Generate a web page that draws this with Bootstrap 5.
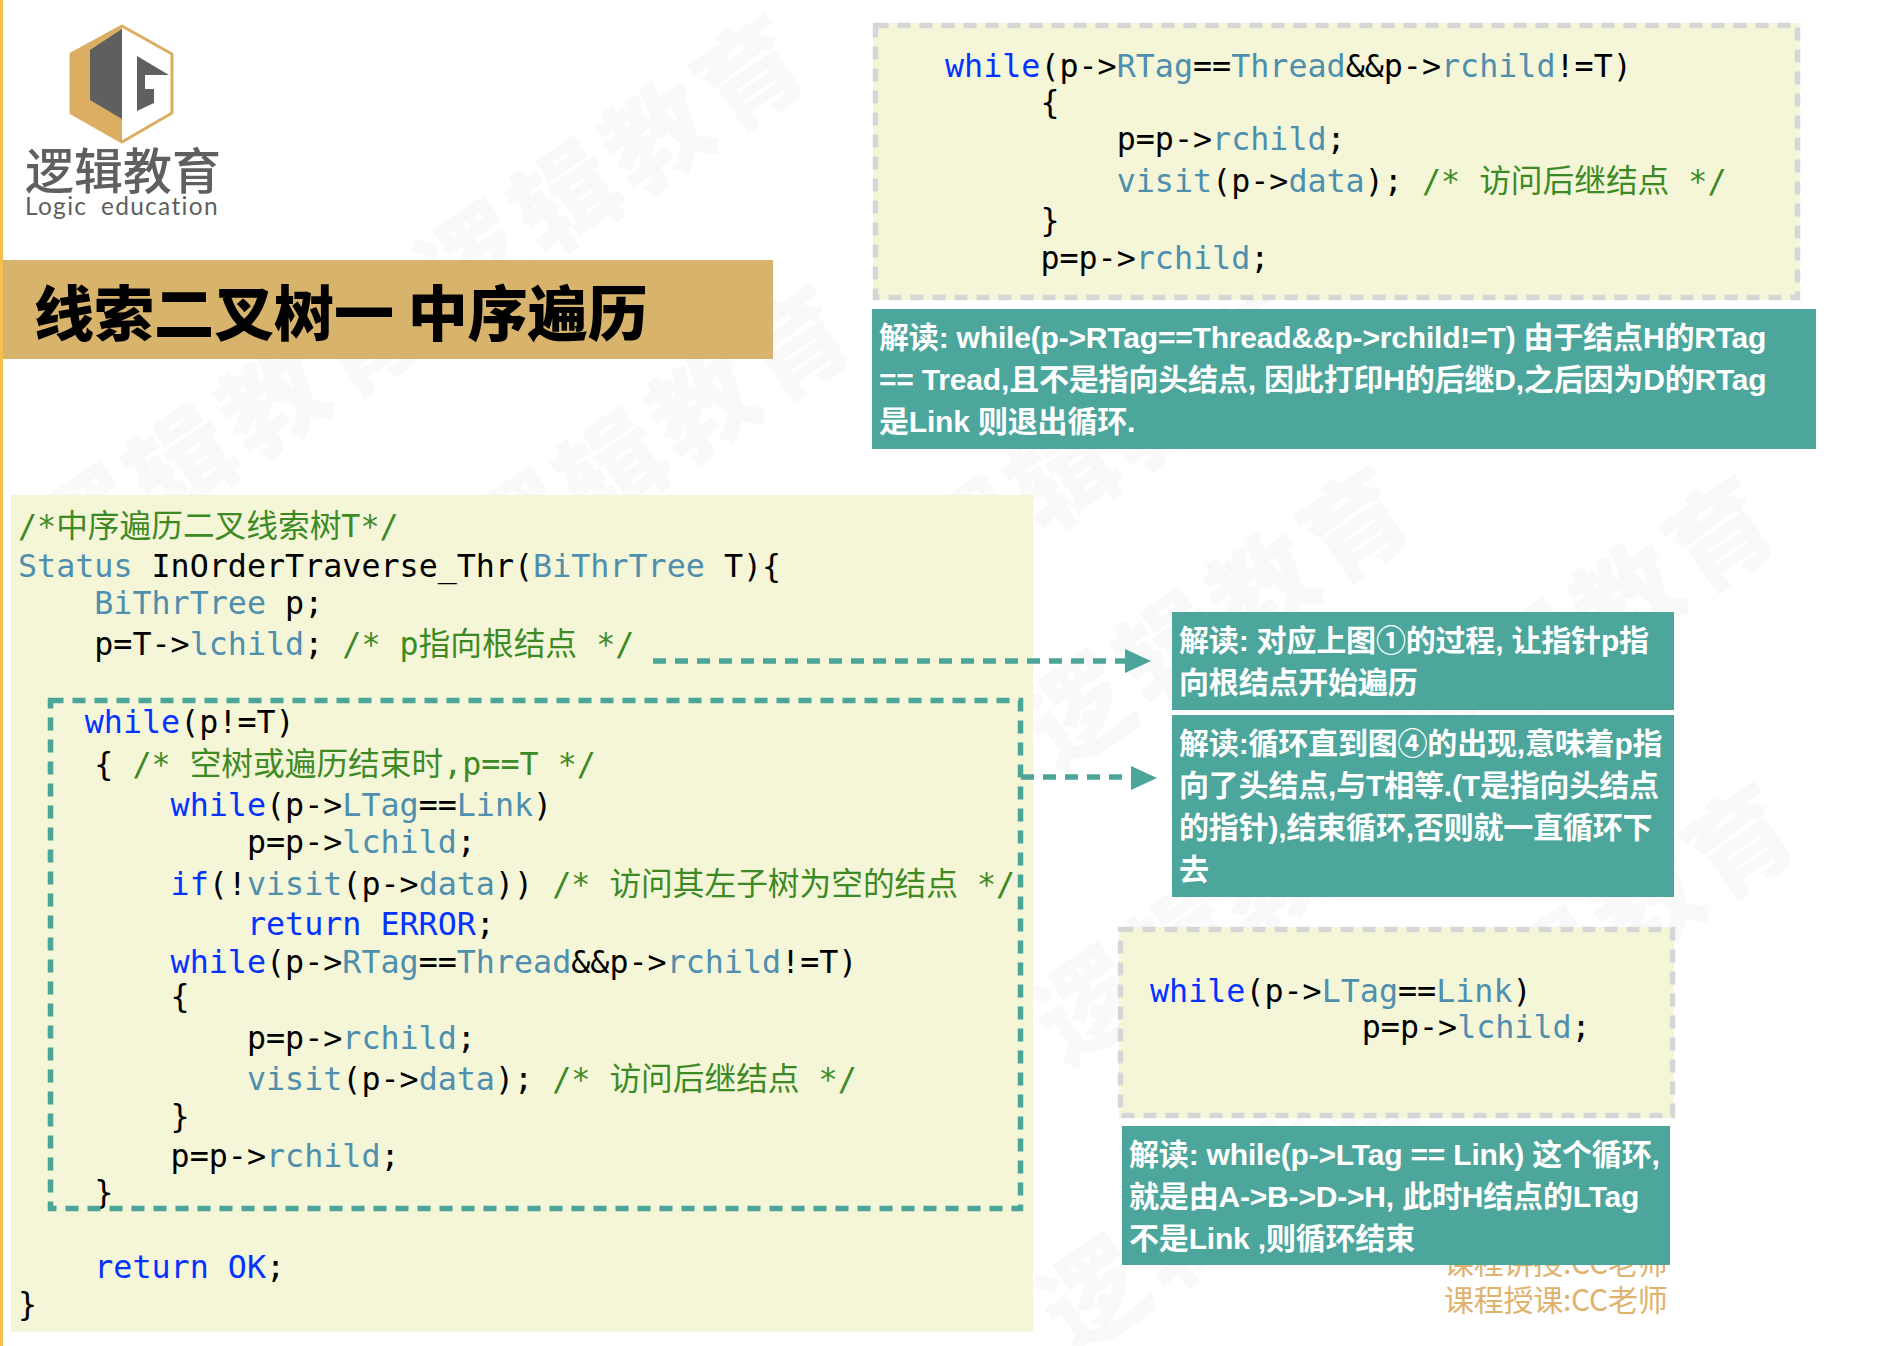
<!doctype html>
<html lang="zh">
<head>
<meta charset="utf-8">
<title>线索二叉树 中序遍历</title>
<link rel="stylesheet" href="https://cdn.jsdelivr.net/npm/bootstrap@5.3.0/dist/css/bootstrap.min.css">
<style>
html,body{margin:0;background:#fff;}
.slide{position:relative;width:1882px;height:1346px;overflow:hidden;background:#fff;border-left:3px solid #f5c04f;font-family:"Liberation Sans","Noto Sans CJK SC",sans-serif;}
.slide>*{position:absolute;}
.wm{color:#f9f9f9;font:900 104px/104px "Noto Sans CJK SC",sans-serif;white-space:nowrap;transform:rotate(-34deg);transform-origin:52px 52px;letter-spacing:7px;}
.logo-cn{left:22px;top:146px;font:500 49px/44px "Noto Sans CJK SC",sans-serif;color:#5f5f5f;white-space:nowrap;}
.logo-en{left:22px;top:194px;font:400 24.5px/24px "Lato",sans-serif;color:#5f5f5f;white-space:nowrap;letter-spacing:1.3px;word-spacing:6px;}
.title-band{left:0;top:260px;width:770px;height:99px;background:#d8b36b;color:#000;font:900 60px/99px "Noto Sans CJK SC",sans-serif;padding-left:31px;white-space:nowrap;}
.codepanel{background:#f5f6d8;font:400 31.7px/1 "DejaVu Sans Mono","Noto Sans CJK SC",monospace;color:#000;}
.codeln{display:block;white-space:pre;line-height:38px;height:38px;}
.main-code{left:8px;top:495px;width:1022px;height:837px;padding:12px 0 0 7px;}
.top-code{left:870px;top:23px;width:927px;height:277px;padding:24px 0 0 72px;}
.side-code{left:1116px;top:927px;width:555px;height:191px;padding:45px 0 0 31px;}
.kw{color:#0433ff;}.ty{color:#4f8fae;}.cm{color:#3d8a25;}
.h34{height:34px}.h36{height:36px}.h37{height:37px}.h38{height:38px}.h39{height:39px}.h40{height:40px}.h41{height:41px}.h42{height:42px}.h75{height:75px}.h78{height:78px}
.in3h{padding-left:3.5ch}.in4{padding-left:4ch}.in8{padding-left:8ch}.in12{padding-left:12ch}.in5{padding-left:5ch}.in9{padding-left:9ch}.in11{padding-left:11.1ch}
.note{background:#4ca69c;color:#fff;font:700 30px/42px "Liberation Sans","Noto Sans CJK SC",sans-serif;white-space:pre;padding:8px 0 0 7px;letter-spacing:-.18px;}
.note-a{left:869px;top:309px;width:944px;height:140px;}
.note-b{left:1169px;top:612px;width:502px;height:98px;}
.note-c{left:1169px;top:715px;width:502px;height:182px;}
.note-d{left:1119px;top:1126px;width:548px;height:139px;}
.credit{left:1441px;font:400 30px/36px "Noto Sans CJK SC",sans-serif;color:#dfb36d;white-space:nowrap;letter-spacing:-.25px;}
.credit-1{top:1243px}.credit-2{top:1280px}
.overlay{left:0;top:0;pointer-events:none;}
</style>
</head>
<body>
<div class="slide">
  <div class="wm" style="left:415px;top:203px">逻辑教育</div>
  <div class="wm" style="left:31px;top:468px">逻辑教育</div>
  <div class="wm" style="left:461px;top:473px">逻辑教育</div>
  <div class="wm" style="left:913px;top:480px">逻辑教育</div>
  <div class="wm" style="left:1020px;top:654px">逻辑教育</div>
  <div class="wm" style="left:1385px;top:664px">逻辑教育</div>
  <div class="wm" style="left:1405px;top:971px">逻辑教育</div>
  <div class="wm" style="left:1029px;top:948px">逻辑教育</div>
  <div class="wm" style="left:1035px;top:1238px">逻辑教育</div>

  <svg class="overlay" width="240" height="150" viewBox="0 0 240 150" aria-label="Logic education logo">
    <polygon points="119,26 169,54 169,113 119,142 68,113 68,54" fill="#fff" stroke="#dcae63" stroke-width="3" stroke-linejoin="round"/>
    <polygon points="119,25 67,53 67,113 119,143" fill="#dcae63"/>
    <polygon points="119,29 119,119 87,100 87,50" fill="#5f5f5f"/>
    <polygon points="134,56 166,75 142,75 142,89 151,89 151,103 134,111" fill="#5f5f5f"/>
  </svg>
  <div class="logo-cn">逻辑教育</div>
  <div class="logo-en">Logic education</div>

  <div class="title-band">线索二叉树一 中序遍历</div>

  <div class="codepanel top-code">
<span class="codeln h36"><span class="kw">while</span>(p-&gt;<span class="ty">RTag</span>==<span class="ty">Thread</span>&amp;&amp;p-&gt;<span class="ty">rchild</span>!=T)</span>
<span class="codeln h37 in5">{</span>
<span class="codeln h42 in9">p=p-&gt;<span class="ty">rchild</span>;</span>
<span class="codeln h39 in9"><span class="ty">visit</span>(p-&gt;<span class="ty">data</span>); <span class="cm">/* 访问后继结点 */</span></span>
<span class="codeln h38 in5">}</span>
<span class="codeln h38 in5">p=p-&gt;<span class="ty">rchild</span>;</span>
  </div>

  <div class="note note-a">解读: while(p-&gt;RTag==Thread&amp;&amp;p-&gt;rchild!=T) 由于结点H的RTag
== Tread,且不是指向头结点, 因此打印H的后继D,之后因为D的RTag
是Link 则退出循环.</div>

  <div class="codepanel main-code">
<span class="codeln h40 cm">/*中序遍历二叉线索树T*/</span>
<span class="codeln h37"><span class="ty">Status</span> InOrderTraverse_Thr(<span class="ty">BiThrTree</span> T){</span>
<span class="codeln h41 in4"><span class="ty">BiThrTree</span> p;</span>
<span class="codeln h78 in4">p=T-&gt;<span class="ty">lchild</span>; <span class="cm">/* p指向根结点 */</span></span>
<span class="codeln h42 in3h"><span class="kw">while</span>(p!=T)</span>
<span class="codeln h41 in4">{ <span class="cm">/* 空树或遍历结束时,p==T */</span></span>
<span class="codeln h37 in8"><span class="kw">while</span>(p-&gt;<span class="ty">LTag</span>==<span class="ty">Link</span>)</span>
<span class="codeln h42 in12">p=p-&gt;<span class="ty">lchild</span>;</span>
<span class="codeln h40 in8"><span class="kw">if</span>(!<span class="ty">visit</span>(p-&gt;<span class="ty">data</span>)) <span class="cm">/* 访问其左子树为空的结点 */</span></span>
<span class="codeln h38 in12"><span class="kw">return ERROR</span>;</span>
<span class="codeln h34 in8"><span class="kw">while</span>(p-&gt;<span class="ty">RTag</span>==<span class="ty">Thread</span>&amp;&amp;p-&gt;<span class="ty">rchild</span>!=T)</span>
<span class="codeln h42 in8">{</span>
<span class="codeln h41 in12">p=p-&gt;<span class="ty">rchild</span>;</span>
<span class="codeln h37 in12"><span class="ty">visit</span>(p-&gt;<span class="ty">data</span>); <span class="cm">/* 访问后继结点 */</span></span>
<span class="codeln h40 in8">}</span>
<span class="codeln h36 in8">p=p-&gt;<span class="ty">rchild</span>;</span>
<span class="codeln h75 in4">}</span>
<span class="codeln h37 in4"><span class="kw">return OK</span>;</span>
<span class="codeln h38">}</span>
  </div>

  <div class="codepanel side-code">
<span class="codeln h36"><span class="kw">while</span>(p-&gt;<span class="ty">LTag</span>==<span class="ty">Link</span>)</span>
<span class="codeln h38 in11">p=p-&gt;<span class="ty">lchild</span>;</span>
  </div>

  <div class="credit credit-1">课程讲授:CC老师</div>
  <div class="credit credit-2">课程授课:CC老师</div>

  <div class="note note-d">解读: while(p-&gt;LTag == Link) 这个循环,
就是由A-&gt;B-&gt;D-&gt;H, 此时H结点的LTag
不是Link ,则循环结束</div>

  <div class="note note-b">解读: 对应上图①的过程, 让指针p指
向根结点开始遍历</div>
  <div class="note note-c">解读:循环直到图④的出现,意味着p指
向了头结点,与T相等.(T是指向头结点
的指针),结束循环,否则就一直循环下
去</div>

  <svg class="overlay" width="1879" height="1346" viewBox="3 0 1879 1346" aria-hidden="true">
    <g fill="none" stroke-width="5.5" stroke-dasharray="13 9">
      <rect x="875.5" y="25.5" width="922" height="272" stroke="#d6d6d6"/>
      <rect x="1120.5" y="929.5" width="552" height="186" stroke="#d6d6d6"/>
      <rect x="50.5" y="700.5" width="970" height="508" stroke="#4ba598"/>
      <path d="M653 661H1125" stroke="#4ba598"/>
      <path d="M1021 777H1131" stroke="#4ba598"/>
    </g>
    <polygon points="1125,649 1151,661 1125,673" fill="#4ba598"/>
    <polygon points="1131,766 1157,778 1131,790" fill="#4ba598"/>
  </svg>
</div>
</body>
</html>
